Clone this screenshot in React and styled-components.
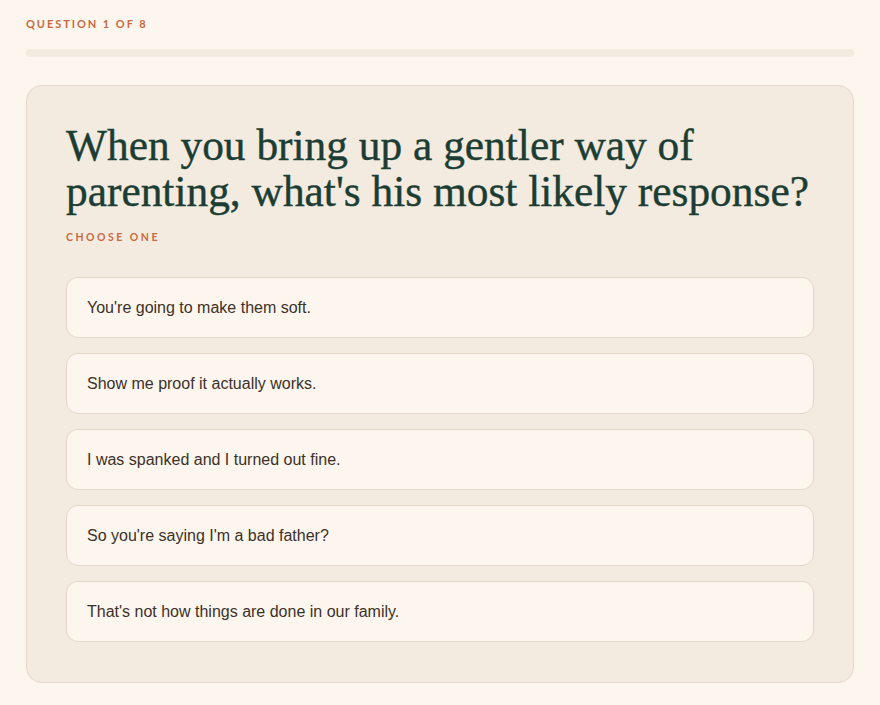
import React from "react";
import styled, { createGlobalStyle } from "styled-components";

const Global = createGlobalStyle`
  html, body { margin: 0; padding: 0; background: #fdf6ee; }
  * { box-sizing: border-box; }
`;

const Page = styled.div`
  padding: 16px 26px 22px;
  background: #fdf6ee;
  min-height: 705px;
`;

const Eyebrow = styled.div`
  font-family: Lato, "Open Sans", sans-serif;
  font-weight: 700;
  font-size: 11px;
  line-height: 16px;
  letter-spacing: 1.95px;
  text-transform: uppercase;
  color: #c86a3f;
`;

const Track = styled.div`
  margin-top: 17px;
  height: 8px;
  border-radius: 4px;
  background: #f3ebdf;
  overflow: hidden;
`;

const Fill = styled.div`
  height: 100%;
  background: #c86a3f;
`;

const Card = styled.section`
  margin-top: 28px;
  background: #f3ebdf;
  border: 1px solid #e2d8c8;
  border-radius: 16px;
  padding: 36px 39px 40px;
`;

const Heading = styled.h1`
  margin: 0;
  font-family: "Liberation Serif", "DejaVu Serif", serif;
  font-weight: 400;
  font-size: 43.4px;
  line-height: 46px;
  color: #1c3d33;
  -webkit-text-stroke: 0.4px #1c3d33;
`;

const Sub = styled(Eyebrow)`
  margin-top: 15px;
  font-size: 10.5px;
  letter-spacing: 2.5px;
`;

const Options = styled.div`
  margin-top: 32px;
  display: flex;
  flex-direction: column;
  gap: 15px;
`;

const Option = styled.button`
  display: flex;
  align-items: center;
  height: 61px;
  padding: 0 20px;
  background: #fdf6ee;
  border: 1px solid #e2d8c8;
  border-radius: 12px;
  font-family: "Liberation Sans", Arial, sans-serif;
  font-size: 16px;
  color: #3b3129;
  text-align: left;
  cursor: pointer;
`;

const answers = [
  "You're going to make them soft.",
  "Show me proof it actually works.",
  "I was spanked and I turned out fine.",
  "So you're saying I'm a bad father?",
  "That's not how things are done in our family.",
];

export default function App() {
  return (
    <>
      <Global />
      <Page>
        <Eyebrow>Question 1 of 8</Eyebrow>
        <Track>
          <Fill style={{ width: "0%" }} />
        </Track>
        <Card>
          <Heading>
            When you bring up a gentler way of
            <br />
            parenting, what's his most likely response?
          </Heading>
          <Sub>Choose one</Sub>
          <Options>
            {answers.map((a) => (
              <Option key={a}>{a}</Option>
            ))}
          </Options>
        </Card>
      </Page>
    </>
  );
}
